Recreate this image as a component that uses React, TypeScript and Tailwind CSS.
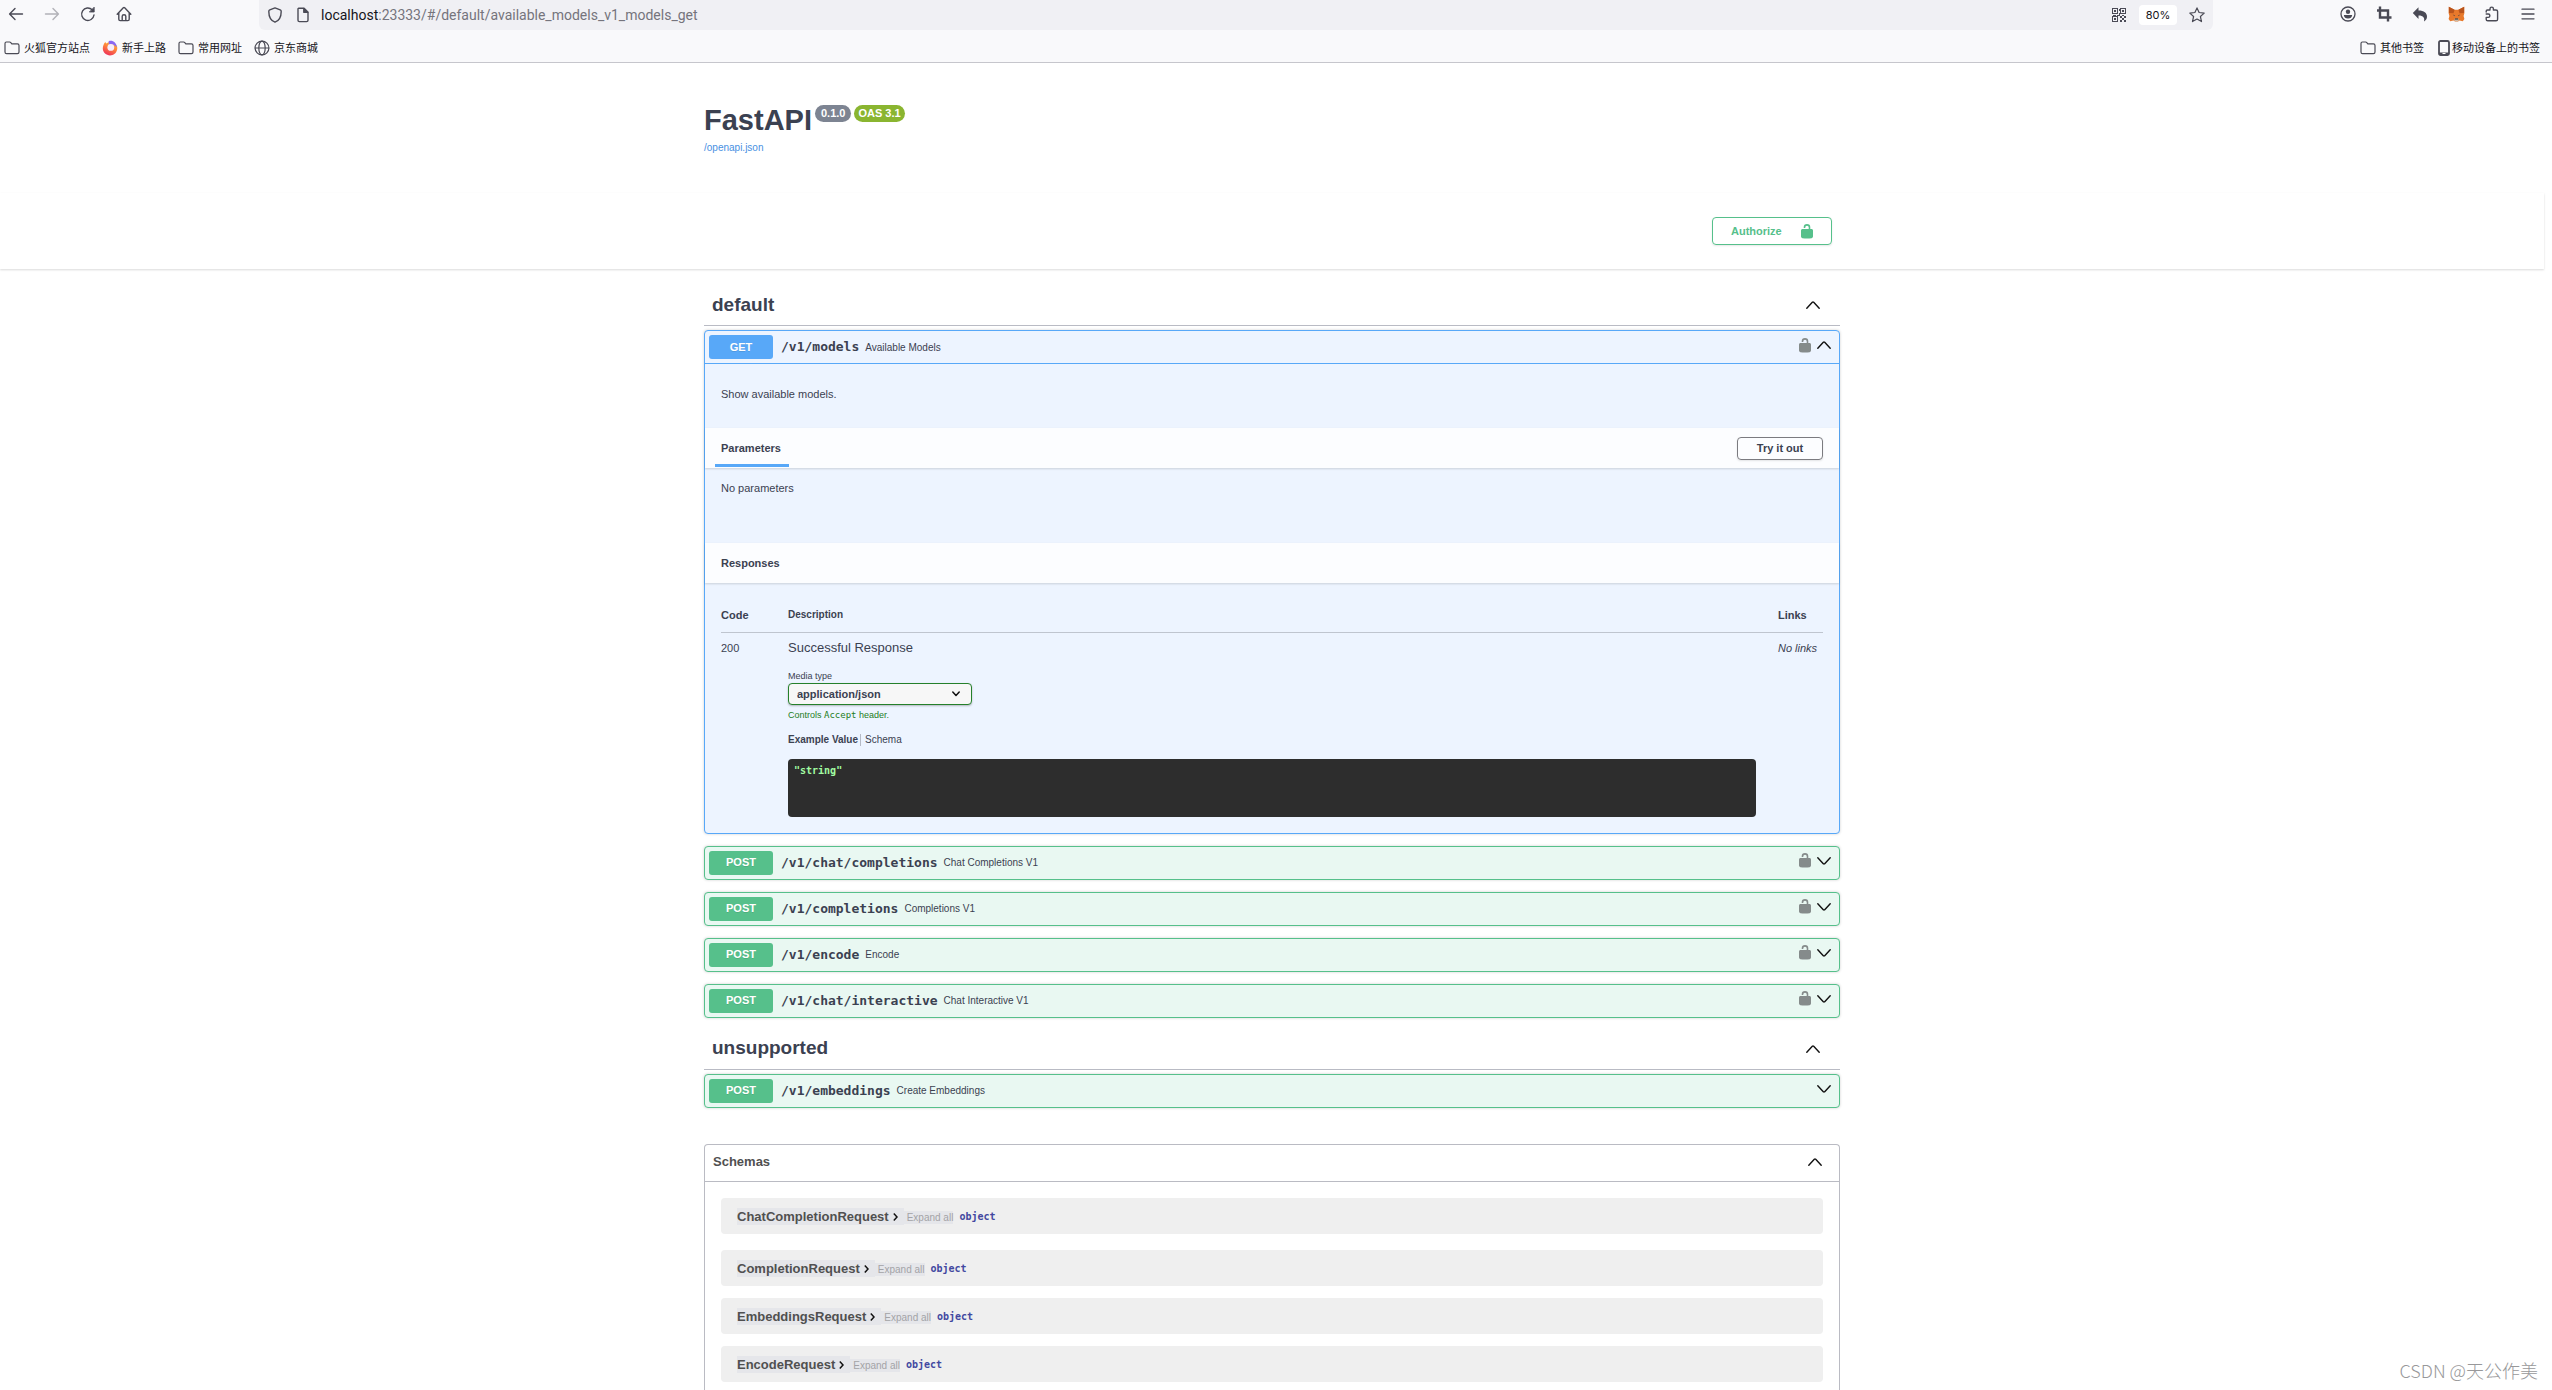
import React from "react";

const sans = "font-['Liberation_Sans',Arial,sans-serif]";
const mono = "font-['DejaVu_Sans_Mono',monospace]";
const cjk = "font-['Noto_Sans_CJK_SC',sans-serif]";

function Chevron({ open }: { open?: boolean }) {
  return (
    <svg viewBox="0 0 14 8" className="h-2 w-3.5 shrink-0" fill="none" stroke="#111" strokeWidth="1.4" strokeLinecap="round" strokeLinejoin="round">
      <path d={open ? "M.8 7.2 6.3 1.2Q7 .6 7.7 1.2L13.2 7.2" : "M.8 .8 6.3 6.8Q7 7.4 7.7 6.8L13.2 .8"} />
    </svg>
  );
}

function Unlock({ className }: { className: string }) {
  return (
    <svg viewBox="0 0 12 15" className={`h-[15px] w-3 shrink-0 ${className}`}>
      <path d="M8.500 5.500V3.300A2.500 2.400 0 0 0 3.500 3.300V4" fill="none" stroke="currentColor" strokeWidth="1.600" />
      <path d="M1.200 5H10.800Q12 5.200 12 6.400V12.600Q12 14 10.600 14.200 6 15 1.400 14.200 0 14 0 12.600V6.400Q0 5.200 1.200 5Z" fill="currentColor" />
    </svg>
  );
}

const stroke = {
  fill: "none",
  stroke: "#4a4a55",
  strokeWidth: 1.4,
  strokeLinecap: "round",
  strokeLinejoin: "round",
} as const;

function ToolButton({ label, children }: { label: string; children: React.ReactNode }) {
  return (
    <button aria-label={label} className="flex h-7 w-9 items-center justify-center">
      {children}
    </button>
  );
}

function Folder() {
  return (
    <svg viewBox="0 0 16 16" className="h-4 w-4" {...stroke} strokeWidth={1.2}>
      <path d="M1 3.4Q1 2 2.4 2H5.6Q6.3 2 6.8 2.6L7.8 3.8H13.4Q15 3.8 15 5.4V12Q15 13.6 13.4 13.6H2.6Q1 13.6 1 12Z" />
    </svg>
  );
}

function Globe() {
  return (
    <svg viewBox="0 0 16 16" className="h-4 w-4" {...stroke} strokeWidth={1.2}>
      <circle cx="8" cy="8" r="6.9" />
      <ellipse cx="8" cy="8" rx="3.2" ry="6.9" />
      <path d="M1.2 8H14.8" />
    </svg>
  );
}

function Firefox() {
  return (
    <svg viewBox="0 0 16 16" className="h-4 w-4">
      <defs>
        <linearGradient id="ffx" x1="0.8" y1="0" x2="0.3" y2="1">
          <stop offset="0" stopColor="#ffc23a" />
          <stop offset="0.4" stopColor="#ff8a3a" />
          <stop offset="1" stopColor="#ee2f5b" />
        </linearGradient>
      </defs>
      <path d="M3.400 2 4.200 3.600C6 2 8.400 1.600 10 2.400L13.600 4.200C15 5.600 15.600 7.400 15.200 9.200 14.600 13 11.600 15.400 8 15.400S.8 12.600.8 8.600C.8 6 1.800 3.600 3.400 2Z" fill="url(#ffx)" />
      <path d="M6.600 1.200C10.400-.2 14.600 2.400 14.800 7.200 13.200 5.400 10.600 3.400 6.800 4.400Z" fill="#8a68f2" />
      <circle cx="8.800" cy="7.400" r="3.400" fill="#f6ecfa" />
    </svg>
  );
}

function Phone() {
  return (
    <svg viewBox="0 0 12 16" className="h-4 w-3">
      <rect x="1" y="1" width="10" height="14" rx="1.500" fill="none" stroke="#4a4a55" strokeWidth="1.800" />
      <path d="M1 12.500H11V15H1Z" fill="#4a4a55" />
      <path d="M4.500 13.500H7.500" stroke="#fff" strokeWidth="1" />
    </svg>
  );
}

function Qr() {
  return (
    <svg viewBox="0 0 15 15" className="h-[15px] w-[15px]" shapeRendering="crispEdges">
      <g fill="none" stroke="#4a4a55">
        <rect x="0.5" y="0.5" width="5" height="5" />
        <rect x="8.500" y="0.5" width="5" height="5" />
        <rect x="0.5" y="8.500" width="5" height="5" />
      </g>
      <path fill="#4a4a55" d="M2 2h2v2H2zM10 2h2v2h-2zM2 10h2v2H2zM7 1h1v2H7zM7 5h1v3H7zM1 7h3v1H1zM5 7h2v1H5zM8 8h2v2H8zM10 10h2v2h-2zM12 8h2v2h-2zM8 12h2v2H8zM12 12h2v2h-2zM10 7h2v1h-2z" />
    </svg>
  );
}

function Fox() {
  return (
    <svg viewBox="0 0 17 16" className="h-4 w-[17px]">
      <path d="M.8.8 6.600 3.800H10.400L16.200.8 16.400 7 15.600 10 16.400 13 14.800 15.200 11.500 14.400 10 15.600H7L5.500 14.400 2.200 15.200.6 13 1.400 10 .6 7Z" fill="#e8792b" />
      <path d="M.8.8 6.600 3.800 5.500 7.200 1 7ZM16.200.8 10.400 3.800 11.500 7.200 16 7Z" fill="#b9541c" />
      <path d="M6.600 12.400H10.400L10.800 14.400 10 15.300H7L6.200 14.400Z" fill="#c9b9a8" />
      <path d="M7 12.400H10L10.300 13.600H6.700Z" fill="#222" />
      <path d="M4.600 8.600 6.600 9.200 6.800 10.200ZM12.400 8.600 10.400 9.200 10.200 10.200Z" fill="#2a3545" />
    </svg>
  );
}

function Bookmark({ icon, text, tight }: { icon: React.ReactNode; text: string; tight?: boolean }) {
  return (
    <a href="#bookmark" className={`flex items-center ${tight ? "gap-0.5" : "gap-1"}`}>
      {icon}
      <span>{text}</span>
    </a>
  );
}

function Browser() {
  return (
    <header className={`shrink-0 border-b border-[#c6c6cc] bg-[#f9f9fb] text-[#15141a] ${cjk}`}>
      <div className="flex h-[30px] items-start">
        <nav className="-ml-0.5 flex w-[261px]">
          <ToolButton label="Back">
            <svg viewBox="0 0 16 16" className="h-4 w-4" {...stroke}><path d="M14.500 8H1.800M7 2.600 1.600 8 7 13.400" /></svg>
          </ToolButton>
          <ToolButton label="Forward">
            <svg viewBox="0 0 16 16" className="h-4 w-4 opacity-40" {...stroke}><path d="M1.500 8H14.200M9 2.600 14.400 8 9 13.400" /></svg>
          </ToolButton>
          <ToolButton label="Reload">
            <svg viewBox="0 0 16 16" className="h-4 w-4" {...stroke}>
              <path d="M14 9A6.200 6.200 0 1 1 12.200 3.800" />
              <path d="M14.200 1.500V6H9.700Z" fill="#4a4a55" strokeWidth="0.8" />
            </svg>
          </ToolButton>
          <ToolButton label="Home">
            <svg viewBox="0 0 16 16" className="h-4 w-4" {...stroke}>
              <path d="M1.200 8.200 7.300 1.800Q8 1.200 8.700 1.800L14.800 8.200M2.800 7V13.200Q2.800 14.600 4.200 14.600H11.800Q13.200 14.600 13.200 13.200V7" />
              <path d="M6.200 14.400V10.200Q6.200 8.800 8 8.800T9.800 10.200V14.400" />
            </svg>
          </ToolButton>
        </nav>
        <div className="flex h-[30px] grow items-center rounded-b-md bg-[#f0f0f4] px-2">
          <button aria-label="Tracking protection" className="w-4">
            <svg viewBox="0 0 16 16" className="h-4 w-4" {...stroke}>
              <path d="M8 .9 13.200 2.900Q14.200 3.300 14.200 4.400C14.200 9.500 12 13.600 8 15.200 4 13.600 1.800 9.500 1.800 4.400Q1.800 3.300 2.800 2.900Z" />
            </svg>
          </button>
          <button aria-label="Site information" className="ml-3 w-4">
            <svg viewBox="0 0 16 16" className="h-4 w-4" {...stroke}>
              <path d="M3.600 1.200H9L13 5.200V13.200Q13 14.600 11.600 14.600H4.400Q3 14.600 3 13.200V1.800ZM9 1.500V5.200H12.800" />
              <path d="M9 1.500V5.200H12.800Z" fill="#4a4a55" />
            </svg>
          </button>
          <div className="ml-2.5 flex grow items-center font-['Roboto',sans-serif] text-[14px] leading-6">
            <label htmlFor="address">localhost</label>
            <input id="address" readOnly value=":23333/#/default/available_models_v1_models_get" className="h-6 grow bg-transparent text-[#75747c] outline-none" />
          </div>
          <button aria-label="QR code"><Qr /></button>
          <button className="ml-3 h-5 w-[38px] rounded bg-white font-['Inter',sans-serif] text-[11px]">80%</button>
          <button aria-label="Bookmark this page" className="ml-3">
            <svg viewBox="0 0 16 16" className="h-4 w-4" {...stroke} strokeWidth={1.200}>
              <path d="M8 .9 10.100 5.500 15.200 6.100 11.400 9.500 12.500 14.600 8 12.100 3.500 14.600 4.600 9.500 .8 6.100 5.900 5.500Z" />
            </svg>
          </button>
        </div>
        <nav className="flex w-[339px] justify-end pr-1.5">
          <ToolButton label="Account">
            <svg viewBox="0 0 16 16" className="h-4 w-4" {...stroke} strokeWidth={1.300}>
              <circle cx="8" cy="8" r="7" />
              <circle cx="8" cy="5.800" r="2.200" fill="#4a4a55" stroke="none" />
              <path d="M3.800 9H12.200Q11.800 12.600 8 12.600T3.800 9Z" fill="#4a4a55" stroke="none" />
            </svg>
          </ToolButton>
          <ToolButton label="Screenshot">
            <svg viewBox="0 0 16 16" className="h-4 w-4" fill="none" stroke="#4a4a55" strokeWidth="2.400">
              <path d="M1 4.500H12V15.500M4 .5V11.500H15.500" />
            </svg>
          </ToolButton>
          <ToolButton label="Undo">
            <svg viewBox="0 0 16 16" className="h-4 w-4" fill="#4a4a55">
              <path d="M6.500 1.200V4.600C12 4.600 15 7 15 10.800 15 12.800 13.800 14.600 12 15.400 12.800 12 11.500 9.600 6.500 9.600V13L.8 7.100Z" />
            </svg>
          </ToolButton>
          <ToolButton label="Wallet"><Fox /></ToolButton>
          <ToolButton label="Extensions">
            <svg viewBox="0 0 16 16" className="h-4 w-4" {...stroke}>
              <path d="M2.200 6V5.200Q2.200 4 3.400 4H6V2.800A1.700 1.700 0 0 1 9.400 2.800V4H12Q13.600 4 13.600 5.600V13.200Q13.600 14.800 12 14.800H3.800Q2.200 14.800 2.200 13.200V11.400H4.200A1.700 1.700 0 0 0 4.200 8H2.200" />
            </svg>
          </ToolButton>
          <ToolButton label="Menu">
            <svg viewBox="0 0 16 16" className="h-4 w-4" {...stroke} strokeWidth={1.300}><path d="M2 3.200H14M2 8H14M2 12.800H14" /></svg>
          </ToolButton>
        </nav>
      </div>
      <div className="flex h-8 items-center justify-between pb-px pl-1 pr-3 pt-1 text-[11px]">
        <nav className="flex items-center gap-3">
          <Bookmark icon={<Folder />} text="火狐官方站点" />
          <Bookmark icon={<Firefox />} text="新手上路" />
          <Bookmark icon={<Folder />} text="常用网址" />
          <Bookmark icon={<Globe />} text="京东商城" />
        </nav>
        <nav className="flex items-center gap-3.5">
          <Bookmark icon={<Folder />} text="其他书签" />
          <Bookmark icon={<Phone />} text="移动设备上的书签" tight />
        </nav>
      </div>
    </header>
  );
}

function SummaryRow({ method, path, text, lock = true, open }: { method: "GET" | "POST"; path: string; text: string; lock?: boolean; open?: boolean }) {
  return (
    <button className="flex h-8 w-full items-center pl-1 pr-2 text-left">
      <span className={`flex h-6 w-16 items-center justify-center rounded-[3px] text-[11px] font-bold text-white [text-shadow:0_1px_0_rgba(0,0,0,.1)] ${method === "GET" ? "bg-[#58a8f8]" : "bg-[#56c08b]"}`}>
        {method}
      </span>
      <span className={`pl-2 text-[13px] font-bold ${mono}`}>{path}</span>
      <span className="grow pl-1.5 text-[10px]">{text}</span>
      <span className="flex items-center gap-1.5 pb-1">
        {lock && <Unlock className="text-[#858b8b]" />}
        <Chevron open={open} />
      </span>
    </button>
  );
}

function PostBlock(props: { path: string; text: string; lock?: boolean }) {
  return (
    <div className="rounded border border-[#56c08b] bg-[#e9f8f2] shadow-[0_0_3px_rgba(0,0,0,.19)]">
      <SummaryRow method="POST" {...props} />
    </div>
  );
}

function TagHeader({ text }: { text: string }) {
  return (
    <h3 className="border-b border-[#b9bbc4]">
      <button className="flex h-11 w-full items-center justify-between pl-2 pr-5 pt-1 text-left text-[19px] font-bold">
        {text}
        <Chevron open />
      </button>
    </h3>
  );
}

function SectionBand({ children }: { children: React.ReactNode }) {
  return <div className="flex h-10 items-center justify-between bg-[#fcfdff] px-4 shadow-[0_1px_2px_rgba(0,0,0,.15)]">{children}</div>;
}

function GetBlock() {
  return (
    <div className="rounded border border-[#58a8f8] bg-[#edf4ff] shadow-[0_0_3px_rgba(0,0,0,.19)]">
      <div className="border-b border-[#58a8f8]">
        <SummaryRow method="GET" path="/v1/models" text="Available Models" open />
      </div>
      <p className="px-4 pb-[26px] pt-[22px] text-[11px] leading-4">Show available models.</p>
      <SectionBand>
        <h4 className="-ml-1.5 flex h-10 flex-col justify-end text-[11px] font-bold">
          <span className="px-1.5 pb-1">Parameters</span>
          <span className="mb-px mt-1 h-[3px] w-[74px] bg-[#58a8f8]" />
        </h4>
        <button className="h-[23px] w-[86px] rounded border border-[#7b7b80] text-[11px] font-bold shadow-[0_1px_2px_rgba(0,0,0,.1)]">Try it out</button>
      </SectionBand>
      <p className="px-4 pb-[47px] pt-3 text-[11px] leading-4">No parameters</p>
      <SectionBand>
        <h4 className="text-[11px] font-bold">Responses</h4>
      </SectionBand>
      <div className="px-4 pb-4 pt-6">
        <table className="w-full table-fixed text-left text-[11px]">
          <colgroup>
            <col className="w-[67px]" />
            <col />
            <col className="w-[45px]" />
          </colgroup>
          <thead>
            <tr className="h-[25px] border-b border-[#bfc5cf] align-top leading-4">
              <th>Code</th>
              <th className="text-[10px]">Description</th>
              <th>Links</th>
            </tr>
          </thead>
          <tbody>
            <tr className="align-top leading-4">
              <td className="pt-[7px]">200</td>
              <td className="pr-[22px] pt-[7px]">
                <p className="text-[13px]">Successful Response</p>
                <div className="flex flex-col items-start pt-[13px]">
                  <label htmlFor="media" className="text-[9px] leading-[14px]">Media type</label>
                  <div className="relative">
                    <select id="media" className="block h-[22px] w-[184px] appearance-none rounded border border-[#25802b] bg-[#f7f7f7] px-2 text-[11px] font-bold shadow-[0_1px_2px_rgba(0,0,0,.25)]">
                      <option>application/json</option>
                    </select>
                    <svg viewBox="0 0 8 6" className="pointer-events-none absolute right-3 top-2 h-1.5 w-2" fill="none" stroke="#111" strokeWidth="1.500" strokeLinecap="round" strokeLinejoin="round">
                      <path d="M.8 1 4 4.500 7.200 1" />
                    </svg>
                  </div>
                  <small className="pt-0.5 text-[9px] leading-4 text-[#1d7d24]">
                    Controls <code className={mono}>Accept</code> header.
                  </small>
                </div>
                <div className="flex items-center pt-[11px] text-[10px] leading-3">
                  <button className="pr-0.5 font-bold">Example Value</button>
                  <button className="border-l border-[#b5bac6] pl-1">Schema</button>
                </div>
                <pre className={`mt-[13px] h-[58px] rounded bg-[#2d2d2d] px-1.5 pt-1.5 text-[10px] font-bold leading-3 text-[#a2fca2] ${mono}`}>"string"</pre>
              </td>
              <td className="pt-[7px] italic">No links</td>
            </tr>
          </tbody>
        </table>
      </div>
    </div>
  );
}

const models = ["ChatCompletionRequest", "CompletionRequest", "EmbeddingsRequest", "EncodeRequest"];

function Schemas() {
  return (
    <section className="mt-9 rounded-t border border-b-0 border-[#babbc3] pb-10 text-[#505050]">
      <h4 className="border-b border-[#babbc3]">
        <button className="flex h-9 w-full items-center justify-between pb-px pl-2 pr-[17px] text-left text-[13px] font-bold leading-4">
          Schemas
          <Chevron open />
        </button>
      </h4>
      <ul className="flex flex-col gap-3 px-4 pt-4">
        {models.map((name, i) => (
          <li key={name} className={`flex h-9 items-center rounded bg-[#efefef] px-4 pt-0.5 ${i === 0 ? "mb-1" : ""}`}>
            <button className="flex h-[17px] items-center bg-[#e5e6ea] pr-1.5 text-[13px] font-bold">
              {name}
              <svg viewBox="0 0 5 8" className="ml-1 h-2 w-[5px]" fill="none" stroke="#111" strokeWidth="1.500">
                <path d="M.8 .6 4 4 .8 7.400" />
              </svg>
            </button>
            <button className="mt-px h-[13px] bg-[#e5e6ea] pl-[3px] text-[10px] leading-[13px] text-[#a3a3a6]">Expand all</button>
            <strong className={`pl-1.5 text-[10px] text-[#4248a0] ${mono}`}>object</strong>
          </li>
        ))}
      </ul>
    </section>
  );
}

export default function App() {
  return (
    <div className={`relative flex h-screen flex-col overflow-hidden bg-white leading-normal text-[#3b4151] ${sans}`}>
      <Browser />
      <main className="min-h-0 grow pr-2">
        <div className="mx-auto max-w-[1168px] px-4 pb-[37px] pt-[39px]">
          <div className="flex items-start gap-[3px]">
            <h1 className="text-[29px] font-bold leading-9">FastAPI</h1>
            <span className="mt-[3px] h-[17px] rounded-full bg-[#7d8492] px-1.5 text-[11px] font-bold leading-[17px] text-white">0.1.0</span>
            <span className="mt-[3px] h-[17px] rounded-full bg-[#8ab530] px-1 text-[11px] font-bold leading-[17px] text-white">OAS 3.1</span>
          </div>
          <a href="#openapi" className="block pt-0.5 text-[10px] leading-4 text-[#4990e2]">/openapi.json</a>
        </div>
        <div className="pb-6 pt-6 shadow-[0_1px_2px_rgba(0,0,0,.15)]">
          <div className="mx-auto flex max-w-[1168px] justify-end px-6">
            <button className="flex h-7 w-[120px] items-center justify-between rounded border border-[#56c08b] px-[18px] text-[11px] font-bold text-[#56c08b] shadow-[0_1px_2px_rgba(0,0,0,.1)]">
              Authorize
              <Unlock className="text-[#56c08b]" />
            </button>
          </div>
        </div>
        <div className="mx-auto max-w-[1168px] px-4 pt-3">
          <TagHeader text="default" />
          <div className="flex flex-col gap-3 pb-[7px] pt-1">
            <GetBlock />
            <PostBlock path="/v1/chat/completions" text="Chat Completions V1" />
            <PostBlock path="/v1/completions" text="Completions V1" />
            <PostBlock path="/v1/encode" text="Encode" />
            <PostBlock path="/v1/chat/interactive" text="Chat Interactive V1" />
          </div>
          <TagHeader text="unsupported" />
          <div className="pt-1">
            <PostBlock path="/v1/embeddings" text="Create Embeddings" lock={false} />
          </div>
          <Schemas />
        </div>
      </main>
      <div className={`absolute bottom-2 right-3.5 text-[18px] font-light leading-6 text-[#98989a] ${cjk}`}>CSDN @天公作美</div>
    </div>
  );
}
